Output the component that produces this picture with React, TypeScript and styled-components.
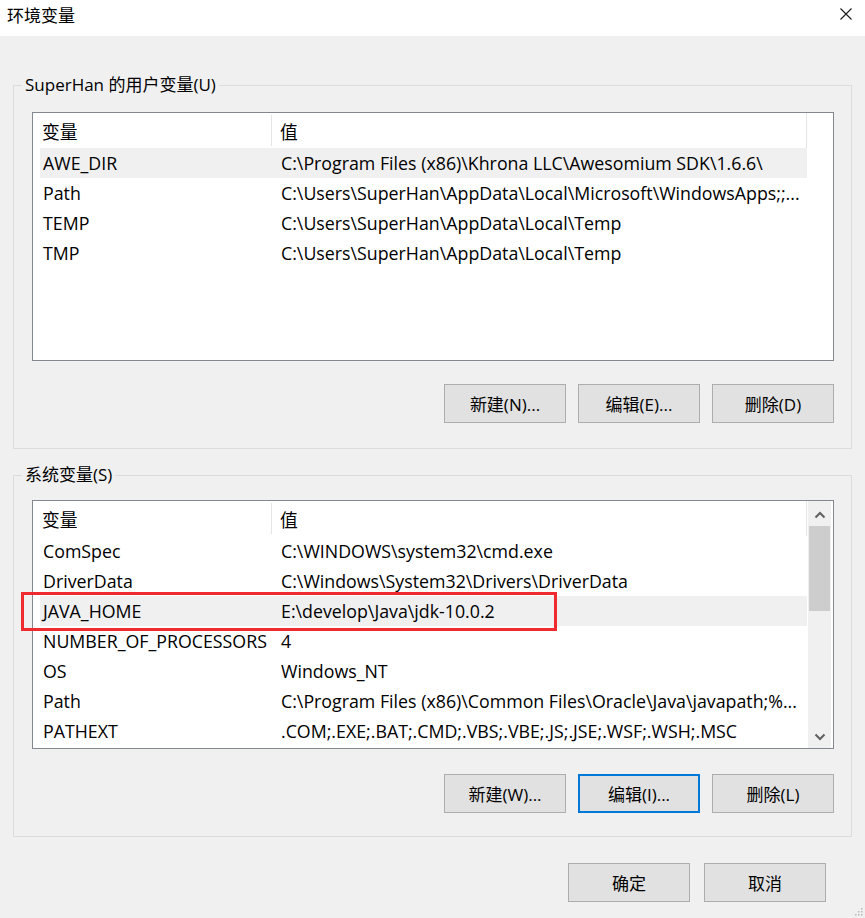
import React from 'react';
import styled, { createGlobalStyle } from 'styled-components';

const GlobalStyle = createGlobalStyle`
  html, body { margin: 0; padding: 0; background: #f0f0f0; }
  body { font-family: "Open Sans", "Noto Sans CJK SC", sans-serif; }
`;

const FONT = `"Open Sans", "Noto Sans CJK SC", sans-serif`;

const Window = styled.div`
  position: relative;
  width: 865px;
  height: 918px;
  background: #f0f0f0;
  overflow: hidden;
  color: #000;
  font-family: ${FONT};
  font-size: 17.8px;
`;

const TitleBar = styled.div`
  height: 36px;
  background: #fff;
  display: flex;
  align-items: flex-start;
  justify-content: space-between;
  padding: 0 13px 0 7px;
`;

const Title = styled.div`
  font-family: "Noto Sans CJK SC", sans-serif;
  font-size: 17px;
  line-height: 30px;
  color: #000;
`;

const CloseIcon = styled.svg`
  margin-top: 8px;
  width: 12px;
  height: 12px;
`;

const Body = styled.div`
  padding: 49px 13px 0 13px;
  display: flex;
  flex-direction: column;
`;

const GroupBox = styled.div<{ $pt: number; $pb: number; $mt: number }>`
  position: relative;
  border: 1px solid #dcdcdc;
  margin-top: ${(p) => p.$mt}px;
  padding: ${(p) => p.$pt}px 17px ${(p) => p.$pb}px 18px;
`;

const GroupLabel = styled.div`
  position: absolute;
  top: -12px;
  left: 8px;
  padding: 0 3px;
  background: #f0f0f0;
  line-height: 22px;
  font-size: 17px;
`;

const ListWrap = styled.div`
  position: relative;
`;

const List = styled.div<{ $h: number }>`
  height: ${(p) => p.$h}px;
  border: 1px solid #828790;
  background: #fff;
  display: flex;
  overflow: hidden;
`;

const ListBody = styled.div`
  width: 774px;
  flex: none;
  display: flex;
  flex-direction: column;
`;

const Header = styled.div`
  height: 35px;
  flex: none;
  display: grid;
  grid-template-columns: 238px 1fr;
  border-right: 1px solid #e5e5e5;
  box-sizing: border-box;
`;

const HeaderCell = styled.div<{ $divider?: boolean }>`
  position: relative;
  display: flex;
  align-items: center;
  padding-left: 9px;
  &::before {
    content: '';
    display: ${(p) => (p.$divider ? 'block' : 'none')};
    position: absolute;
    left: 0;
    top: 2px;
    bottom: 2px;
    width: 1px;
    background: #e5e5e5;
  }
`;

const Row = styled.div<{ $selected?: boolean }>`
  height: 30px;
  flex: none;
  margin-left: 7px;
  display: grid;
  grid-template-columns: 231px 1fr;
  align-items: center;
  background: ${(p) => (p.$selected ? '#f0f0f0' : 'transparent')};
`;

const Cell = styled.div<{ $pl: number }>`
  padding-left: ${(p) => p.$pl}px;
  white-space: nowrap;
  overflow: hidden;
`;

const ScrollColumn = styled.div`
  flex: 1;
  display: flex;
  padding: 0 2px 0 1px;
`;

const Scrollbar = styled.div`
  flex: 1;
  background: #f0f0f0;
  display: flex;
  flex-direction: column;
`;

const ArrowButton = styled.div<{ $h: number; $pt: number }>`
  height: ${(p) => p.$h}px;
  flex: none;
  display: flex;
  justify-content: center;
  align-items: center;
  padding-top: ${(p) => p.$pt}px;
  box-sizing: border-box;
`;

const Thumb = styled.div`
  height: 85px;
  flex: none;
  margin: 0 1px;
  background: #cdcdcd;
`;

const Track = styled.div`
  flex: 1;
`;

const ButtonRow = styled.div<{ $mt: number; $gap: number; $pr?: number }>`
  display: flex;
  justify-content: flex-end;
  gap: ${(p) => p.$gap}px;
  margin-top: ${(p) => p.$mt}px;
  padding-right: ${(p) => p.$pr ?? 0}px;
`;

const Button = styled.button<{ $focused?: boolean }>`
  width: 122px;
  height: 39px;
  margin: 0;
  padding: 0;
  box-sizing: border-box;
  background: #e1e1e1;
  border: ${(p) => (p.$focused ? '2px solid #0078d7' : '1px solid #adadad')};
  font-family: ${FONT};
  font-size: 17px;
  color: #000;
  display: flex;
  align-items: center;
  justify-content: center;
`;

const Annotation = styled.div`
  position: absolute;
  left: -11px;
  top: 92px;
  width: 536px;
  height: 39px;
  box-sizing: border-box;
  border: 3px solid #ef2b2f;
  pointer-events: none;
`;

const Grip = styled.svg`
  position: absolute;
  right: 2px;
  bottom: 2px;
  width: 8px;
  height: 8px;
`;

type Item = { name: string; value: string; selected?: boolean };

const userVars: Item[] = [
  { name: 'AWE_DIR', value: 'C:\\Program Files (x86)\\Khrona LLC\\Awesomium SDK\\1.6.6\\', selected: true },
  { name: 'Path', value: 'C:\\Users\\SuperHan\\AppData\\Local\\Microsoft\\WindowsApps;;...' },
  { name: 'TEMP', value: 'C:\\Users\\SuperHan\\AppData\\Local\\Temp' },
  { name: 'TMP', value: 'C:\\Users\\SuperHan\\AppData\\Local\\Temp' },
];

const sysVars: Item[] = [
  { name: 'ComSpec', value: 'C:\\WINDOWS\\system32\\cmd.exe' },
  { name: 'DriverData', value: 'C:\\Windows\\System32\\Drivers\\DriverData' },
  { name: 'JAVA_HOME', value: 'E:\\develop\\Java\\jdk-10.0.2', selected: true },
  { name: 'NUMBER_OF_PROCESSORS', value: '4' },
  { name: 'OS', value: 'Windows_NT' },
  { name: 'Path', value: 'C:\\Program Files (x86)\\Common Files\\Oracle\\Java\\javapath;%...' },
  { name: 'PATHEXT', value: '.COM;.EXE;.BAT;.CMD;.VBS;.VBE;.JS;.JSE;.WSF;.WSH;.MSC' },
];

const Chevron = ({ up }: { up: boolean }) => (
  <svg width="12" height="8" viewBox="0 0 12 8">
    <path
      d={up ? 'M1.5 6.5 L6 2 L10.5 6.5' : 'M1.5 1.5 L6 6 L10.5 1.5'}
      fill="none"
      stroke="#606060"
      strokeWidth="2"
    />
  </svg>
);

const VarList = ({ items, height, scroll }: { items: Item[]; height: number; scroll?: boolean }) => (
  <List $h={height}>
    <ListBody>
      <Header>
        <HeaderCell>变量</HeaderCell>
        <HeaderCell $divider>值</HeaderCell>
      </Header>
      {items.map((it) => (
        <Row key={it.name + it.value} $selected={it.selected}>
          <Cell $pl={3}>{it.name}</Cell>
          <Cell $pl={10}>{it.value}</Cell>
        </Row>
      ))}
    </ListBody>
    <ScrollColumn>
      {scroll && (
        <Scrollbar>
          <ArrowButton $h={25} $pt={3}>
            <Chevron up />
          </ArrowButton>
          <Thumb />
          <Track />
          <ArrowButton $h={22} $pt={0}>
            <Chevron up={false} />
          </ArrowButton>
        </Scrollbar>
      )}
    </ScrollColumn>
  </List>
);

export default function App() {
  return (
    <Window>
      <GlobalStyle />
      <TitleBar>
        <Title>环境变量</Title>
        <CloseIcon viewBox="0 0 12 12">
          <path d="M0.5 0.5 L11.5 11.5 M11.5 0.5 L0.5 11.5" stroke="#1a1a1a" strokeWidth="1.1" fill="none" />
        </CloseIcon>
      </TitleBar>
      <Body>
        <GroupBox $mt={0} $pt={26} $pb={25}>
          <GroupLabel>SuperHan 的用户变量(U)</GroupLabel>
          <ListWrap>
            <VarList items={userVars} height={247} />
          </ListWrap>
          <ButtonRow $mt={23} $gap={12}>
            <Button>新建(N)...</Button>
            <Button>编辑(E)...</Button>
            <Button>删除(D)</Button>
          </ButtonRow>
        </GroupBox>
        <GroupBox $mt={26} $pt={24} $pb={23}>
          <GroupLabel>系统变量(S)</GroupLabel>
          <ListWrap>
            <VarList items={sysVars} height={247} scroll />
            <Annotation />
          </ListWrap>
          <ButtonRow $mt={25} $gap={12}>
            <Button>新建(W)...</Button>
            <Button $focused>编辑(I)...</Button>
            <Button>删除(L)</Button>
          </ButtonRow>
        </GroupBox>
        <ButtonRow $mt={26} $gap={14} $pr={26}>
          <Button>确定</Button>
          <Button>取消</Button>
        </ButtonRow>
      </Body>
      <Grip viewBox="0 0 8 8">
        <rect x="6" y="0" width="1.5" height="1.5" fill="#b8b8b8" />
        <rect x="3" y="3" width="1.5" height="1.5" fill="#b8b8b8" />
        <rect x="6" y="3" width="1.5" height="1.5" fill="#b8b8b8" />
        <rect x="0" y="6" width="1.5" height="1.5" fill="#b8b8b8" />
        <rect x="3" y="6" width="1.5" height="1.5" fill="#b8b8b8" />
        <rect x="6" y="6" width="1.5" height="1.5" fill="#b8b8b8" />
      </Grip>
    </Window>
  );
}
